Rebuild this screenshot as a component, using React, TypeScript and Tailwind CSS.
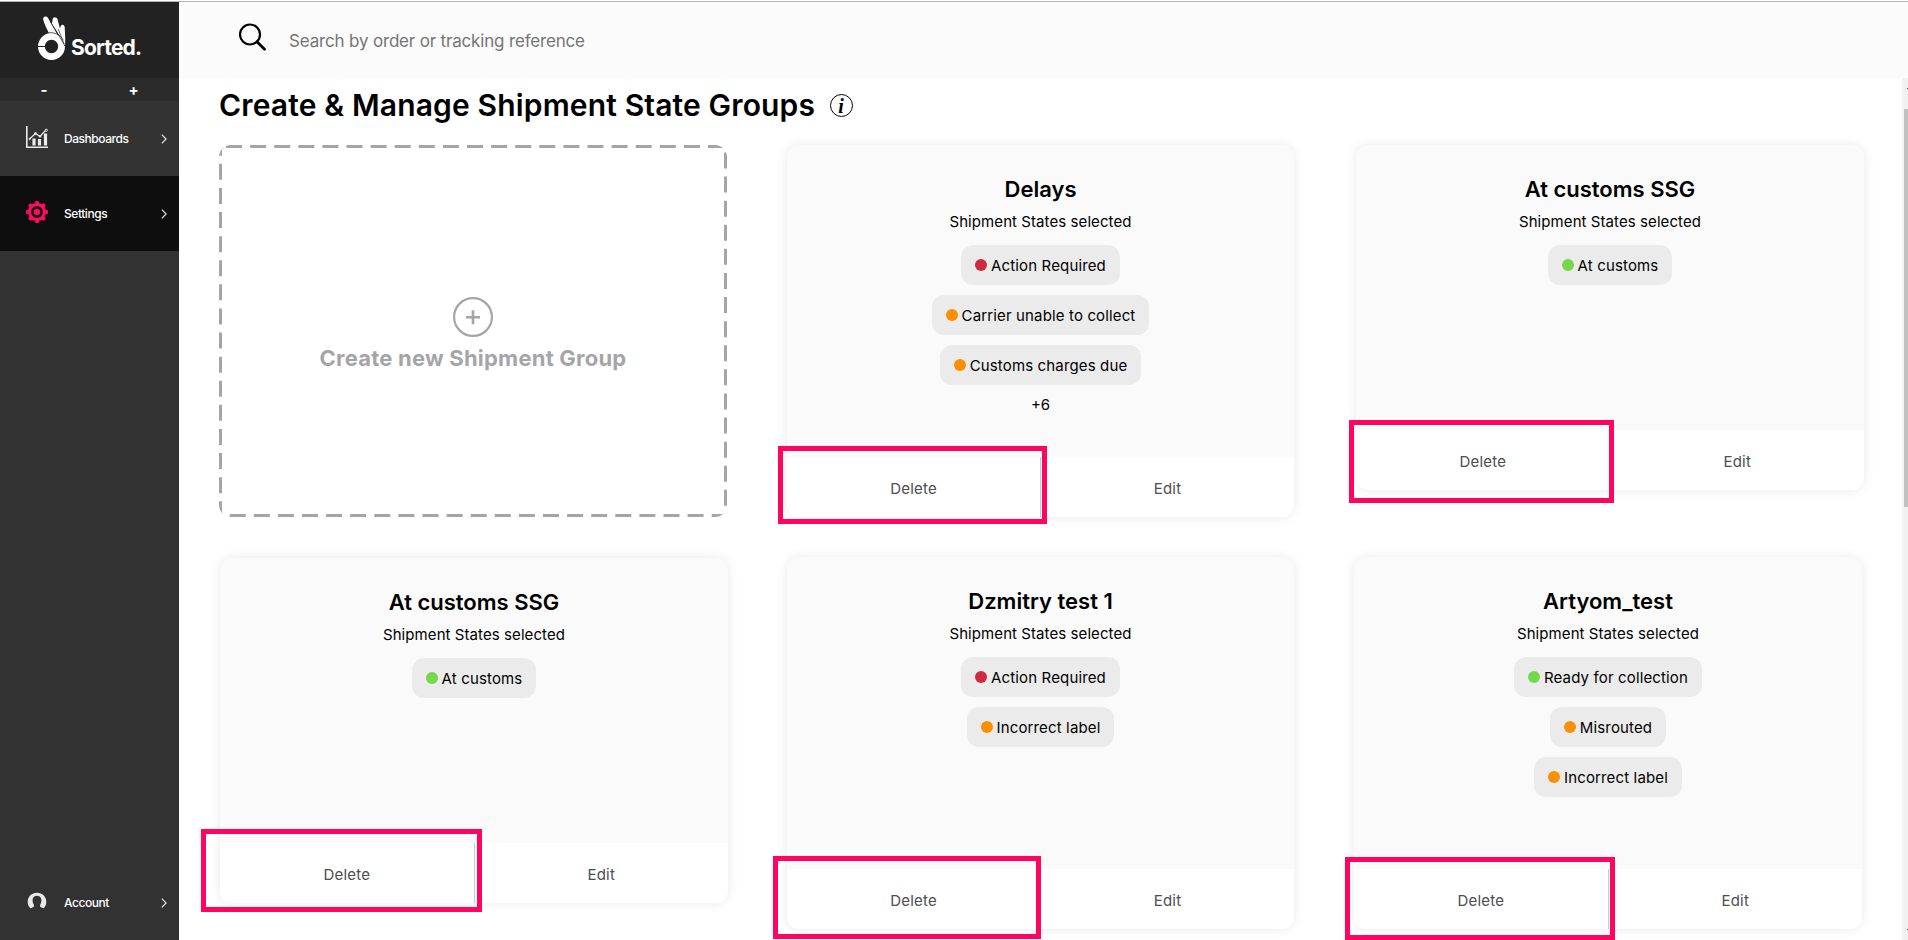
import React from 'react';

type Tone = 'red' | 'orange' | 'green';
interface State {
  tone: Tone;
  label: string;
}
interface Group {
  title: string;
  states: State[];
  more?: string;
  size: string;
  highlight: string;
}

const tones: Record<Tone, string> = {
  red: 'bg-[#cf2a3f]',
  orange: 'bg-[#fa8f00]',
  green: 'bg-[#75d84b]',
};

const topRow: Group[] = [
  {
    title: 'Delays',
    states: [
      { tone: 'red', label: 'Action Required' },
      { tone: 'orange', label: 'Carrier unable to collect' },
      { tone: 'orange', label: 'Customs charges due' },
    ],
    more: '+6',
    size: 'ml-[60px] w-[507px] h-[372px]',
    highlight: '-left-[9px] -top-[11px] w-[269px] h-[78px]',
  },
  {
    title: 'At customs SSG',
    states: [{ tone: 'green', label: 'At customs' }],
    size: 'ml-[62px] w-[508px] h-[345px]',
    highlight: '-left-[7px] -top-[10px] w-[265px] h-[83px]',
  },
];

const bottomRow: Group[] = [
  {
    title: 'At customs SSG',
    states: [{ tone: 'green', label: 'At customs' }],
    size: 'ml-px mt-px w-[508px] h-[345px]',
    highlight: '-left-[19px] -top-[14px] w-[281px] h-[83px]',
  },
  {
    title: 'Dzmitry test 1',
    states: [
      { tone: 'red', label: 'Action Required' },
      { tone: 'orange', label: 'Incorrect label' },
    ],
    size: 'ml-[59px] w-[507px] h-[372px]',
    highlight: '-left-[14px] -top-[13px] w-[268px] h-[83px]',
  },
  {
    title: 'Artyom_test',
    states: [
      { tone: 'green', label: 'Ready for collection' },
      { tone: 'orange', label: 'Misrouted' },
      { tone: 'orange', label: 'Incorrect label' },
    ],
    size: 'ml-[60px] w-[508px] h-[372px]',
    highlight: '-left-[9px] -top-[12px] w-[270px] h-[83px]',
  },
];

function Logo() {
  return (
    <svg width="30" height="48" viewBox="0 0 30 48" fill="#fff">
      <path d="M5.2 4.6C4.6 1.6 8 .4 10 3l13 23-5.500-7.2-6.500-.8C8.500 13.500 6 8.500 5.200 4.600Z" />
      <path d="M14.600 4.500c.4-3 4.200-3 5 .1L25.500 27 13.800 8.500c.5-1.300.6-2.500.8-4Z" />
      <path d="M22.600 11.500c1-2.700 3.900-2 4.100.8.200 5.500 1 13 .2 20L20.800 15c1-.9 1.400-2.200 1.800-3.500Z" />
      <circle cx="13.500" cy="31.500" r="10.100" fill="none" stroke="#fff" strokeWidth="6.800" />
      <path d="M12.200 6.500 26 29M20.300 14l6.400 17M11 17.700c5.500-.6 11.500 2.300 14.300 7.500" fill="none" stroke="#222" strokeWidth=".7" />
      <path d="M0 31.500h7.200" stroke="#222" strokeWidth="1" />
    </svg>
  );
}

function ChartIcon() {
  return (
    <svg width="22" height="22" viewBox="0 0 22 22" fill="none" stroke="#ececec">
      <path d="M.8 0v21.200H22" strokeWidth="1.600" />
      <path d="M8 19.500v-7M13.500 19.500v-6.500M19.500 19.500V7.500" strokeWidth="3.200" />
      <path d="m3.500 13 6-5.500 4.500 3 6-6.500" strokeWidth="1.200" />
      <circle cx="9.500" cy="7.500" r="1.100" fill="#ececec" strokeWidth=".6" />
      <circle cx="14" cy="10.300" r="1" fill="#ececec" strokeWidth=".6" />
      <circle cx="20.300" cy="4.200" r="1.100" fill="#333" strokeWidth=".9" />
      <circle cx="3.600" cy="13" r=".8" fill="#ececec" strokeWidth=".5" />
    </svg>
  );
}

function GearIcon() {
  return (
    <svg width="22" height="22" viewBox="-11 -11 22 22" fill="none" stroke="#ff0a62">
      <circle r="7.400" strokeWidth="3" />
      <circle r="3.200" fill="#ff0a62" stroke="none" />
      {[0, 45, 90, 135, 180, 225, 270, 315].map((a) => (
        <path key={a} d="M-2.500-8 -1.500-11H1.500L2.500-8Z" fill="#ff0a62" stroke="none" transform={`rotate(${a})`} />
      ))}
    </svg>
  );
}

function AccountIcon() {
  return (
    <svg width="20" height="18" viewBox="0 0 20 18">
      <path
        d="M10 .8c5.300 0 9.300 3.900 9.300 8.900 0 2.700-1 5-2.700 6.600-1.200-.6-2.600-1-3.300-1.600-.4-.5-.3-1.500 0-2.200.9-1.500 1.300-3.300 1-5.300C14 5 12.300 3.800 10 3.800S6 5 5.700 7.200c-.3 2 .1 3.800 1 5.300.3.700.4 1.700 0 2.200-.7.600-2.100 1-3.300 1.600C1.700 14.700.7 12.400.7 9.700.7 4.700 4.700.8 10 .8Z"
        fill="#e9e9e9"
      />
    </svg>
  );
}

function NavItem({ icon, label, tone }: { icon: React.ReactNode; label: string; tone: string }) {
  return (
    <a className={`flex h-[75px] shrink-0 items-center pl-[25px] pr-[12px] ${tone}`}>
      <span className="flex w-6 justify-center pb-[3px]">{icon}</span>
      <span className="ml-[15px] flex-1 text-[12px] leading-4 font-medium tracking-[-0.45px] text-white">{label}</span>
      <svg width="6" height="10" viewBox="0 0 6 10" fill="none" stroke="#d8d8d8" strokeWidth="1.300">
        <path d="m.8.6 4.300 4.400L.8 9.400" />
      </svg>
    </a>
  );
}

function GroupCard({ group }: { group: Group }) {
  return (
    <article className={`flex shrink-0 flex-col rounded-[12px] bg-[#fafafa] shadow-[0_0_12px_rgba(0,0,0,0.09)] ${group.size}`}>
      <div className="flex flex-1 flex-col items-center pt-[30px]">
        <h2 className="text-[22px] leading-[28px] font-semibold text-black">{group.title}</h2>
        <p className="mt-[9px] text-[15px] leading-5 tracking-[0.08px] text-black">Shipment States selected</p>
        <ul className="mt-[13px] flex flex-col items-center gap-[10px]">
          {group.states.map((s) => (
            <li key={s.label} className="flex h-10 items-center gap-1 rounded-[12px] bg-[#ebebeb] px-[14px] text-[15px] leading-5 tracking-[0.14px] text-black">
              <span className={`size-3 rounded-full ${tones[s.tone]}`} />
              <span className="pt-px">{s.label}</span>
            </li>
          ))}
        </ul>
        {group.more && <p className="mt-[10px] text-[15px] leading-5 text-black">{group.more}</p>}
      </div>
      <footer className="relative flex h-[60px] rounded-b-[12px] bg-white text-[15px] tracking-[0.2px] text-[#4d4d52]">
        <button className="flex-1 border-r border-[#ccc] pt-[5px]">Delete</button>
        <button className="flex-1 pt-[5px]">Edit</button>
        <span className={`pointer-events-none absolute border-[5px] border-[#ff0560] ${group.highlight}`} />
      </footer>
    </article>
  );
}

function CreateCard() {
  return (
    <button className="relative flex h-[372px] w-[508px] shrink-0 flex-col items-center overflow-hidden rounded-[12px] pt-[152px] text-[#a5a5a9]">
      <svg className="absolute inset-0" width="508" height="372" fill="none">
        <rect width="508" height="372" rx="5" stroke="#a5a5a9" strokeWidth="6" strokeDasharray="16 8.1" strokeDashoffset="-2" />
      </svg>
      <svg width="40" height="40" fill="none" stroke="#a5a5a9" strokeWidth="2.200">
        <circle cx="20" cy="20" r="18.900" />
        <path d="M13 20.300h14M20 13.300v14" strokeWidth="2.600" />
      </svg>
      <span className="mt-[7px] text-[22px] leading-[28px] font-bold tracking-[0.22px]">Create new Shipment Group</span>
    </button>
  );
}

export default function App() {
  return (
    <div className="flex h-[940px] w-[1908px] flex-col overflow-hidden bg-white font-['Inter','Liberation_Sans',sans-serif]">
      <div className="mt-px h-px shrink-0 bg-[#b5b5b5]" />
      <div className="flex min-h-0 flex-1">
        <nav className="flex w-[179px] shrink-0 flex-col bg-[#323232]">
          <div className="flex h-[76px] shrink-0 items-start bg-[#222] pt-[13px] pl-[38px]">
            <Logo />
            <span className="mt-[19px] ml-[3px] text-[21px] leading-7 font-bold tracking-[-0.8px] text-white">Sorted.</span>
          </div>
          <div className="flex h-[23px] shrink-0 items-center bg-[#2b2b2b] pb-px text-[15px] leading-none font-bold text-white">
            <span className="w-[88px] text-center">-</span>
            <span className="w-[91px] text-center">+</span>
          </div>
          <NavItem icon={<ChartIcon />} label="Dashboards" tone="bg-[#333]" />
          <NavItem icon={<GearIcon />} label="Settings" tone="bg-[#0e0e0e]" />
          <div className="flex-1" />
          <NavItem icon={<AccountIcon />} label="Account" tone="bg-[#323232]" />
        </nav>

        <div className="flex min-w-0 flex-1 flex-col">
          <header className="flex h-[76px] shrink-0 items-start bg-[#fbfbfb] pl-[60px]">
            <svg className="mt-[21px]" width="27" height="28" fill="none" stroke="#000" strokeWidth="2.200">
              <circle cx="11" cy="11.500" r="10" />
              <path d="m18 18.700 7.500 7.500" strokeWidth="2.800" strokeLinecap="round" />
            </svg>
            <span className="mt-[27px] ml-[23px] text-[17px] leading-6 tracking-[-0.17px] text-[#757575]">Search by order or tracking reference</span>
          </header>

          <div className="flex min-h-0 flex-1">
            <main className="min-w-0 flex-1 overflow-hidden pl-[40px]">
              <div className="flex h-[67px] items-start pt-[7px]">
                <h1 className="text-[30px] leading-[40px] font-semibold tracking-[0.15px] whitespace-nowrap text-black">Create &amp; Manage Shipment State Groups</h1>
                <span className="mt-[9px] ml-[15px] flex size-[23px] items-center justify-center rounded-full border-[1.500px] border-black pr-px font-['Liberation_Serif',serif] text-[20px] leading-none font-bold text-black italic">
                  i
                </span>
              </div>
              <div className="flex h-[412px] items-start">
                <CreateCard />
                {topRow.map((g) => (
                  <GroupCard key={g.title} group={g} />
                ))}
              </div>
              <div className="flex items-start">
                {bottomRow.map((g) => (
                  <GroupCard key={g.title} group={g} />
                ))}
              </div>
            </main>
            <div className="flex w-[6px] shrink-0 flex-col items-end bg-[#f1f1f1]">
              <span className="mt-[10px] h-px w-px bg-[#505050]" />
              <span className="mt-[20px] h-[398px] w-[4px] bg-[#c1c1c1]" />
              <span className="mt-auto mb-[10px] h-px w-px bg-[#505050]" />
            </div>
          </div>
        </div>
      </div>
    </div>
  );
}
